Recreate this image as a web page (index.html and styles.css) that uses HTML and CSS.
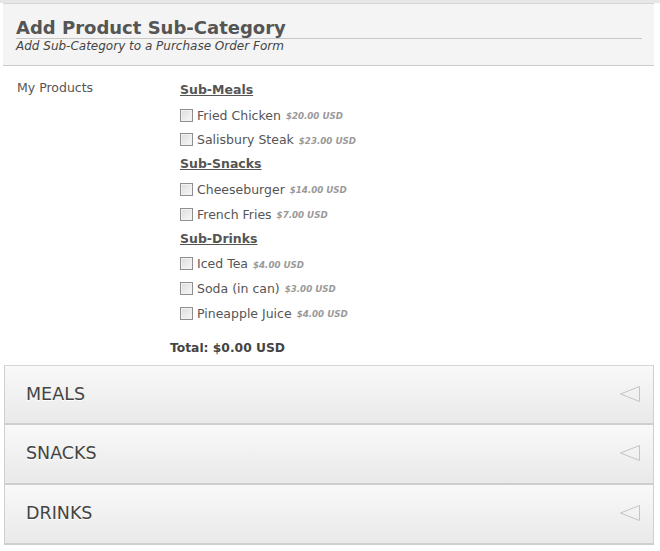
FILE: index.html
```html
<!DOCTYPE html>
<html>
<head>
<meta charset="utf-8">
<link rel="stylesheet" href="styles.css">
</head>
<body>
<div class="page">
  <div class="header">
    <h1 class="title">Add Product Sub-Category</h1>
    <div class="subtitle">Add Sub-Category to a Purchase Order Form</div>
  </div>
  <div class="form">
    <div class="label">My Products</div>
    <div class="options">
      <div class="group">Sub-Meals</div>
      <label class="item"><span class="box"></span>Fried Chicken <span class="price">$20.00 USD</span></label>
      <label class="item"><span class="box"></span>Salisbury Steak <span class="price">$23.00 USD</span></label>
      <div class="group">Sub-Snacks</div>
      <label class="item"><span class="box"></span>Cheeseburger <span class="price">$14.00 USD</span></label>
      <label class="item"><span class="box"></span>French Fries <span class="price">$7.00 USD</span></label>
      <div class="group">Sub-Drinks</div>
      <label class="item"><span class="box"></span>Iced Tea <span class="price">$4.00 USD</span></label>
      <label class="item"><span class="box"></span>Soda (in can) <span class="price">$3.00 USD</span></label>
      <label class="item"><span class="box"></span>Pineapple Juice <span class="price">$4.00 USD</span></label>
    </div>
  </div>
  <div class="total">Total: $0.00 USD</div>
  <div class="accordion">
    <div class="panel"><span class="ptitle">MEALS</span><svg class="arrow" width="22" height="18" viewBox="0 0 22 18"><path d="M20.5 1.5 L1.5 9 L20.5 16.5 Z" fill="none" stroke="#c4c4c4" stroke-width="1"/></svg></div>
    <div class="panel"><span class="ptitle">SNACKS</span><svg class="arrow" width="22" height="18" viewBox="0 0 22 18"><path d="M20.5 1.5 L1.5 9 L20.5 16.5 Z" fill="none" stroke="#c4c4c4" stroke-width="1"/></svg></div>
    <div class="panel"><span class="ptitle">DRINKS</span><svg class="arrow" width="22" height="18" viewBox="0 0 22 18"><path d="M20.5 1.5 L1.5 9 L20.5 16.5 Z" fill="none" stroke="#c4c4c4" stroke-width="1"/></svg></div>
  </div>
</div>
</body>
</html>
```
FILE: styles.css
```css
* { box-sizing: border-box; }
html, body { margin: 0; padding: 0; background: #fff; }
body {
  font-family: "DejaVu Sans", Verdana, sans-serif;
  color: #444;
}
.page {
  border-top: 3px solid #e6e6e6;
  width: 660px;
}
.header {
  margin: 0 6px 0 3px;
  background: #f4f4f4;
  border-top: 1px solid #d6d6d6;
  border-bottom: 1px solid #cccccc;
  padding: 14px 12px 11px 13px;
  height: 63px;
}
.title {
  margin: 0;
  font-size: 18px;
  font-weight: bold;
  color: #555;
  line-height: 20px;
  padding-bottom: 0;
  border-bottom: 1px solid #c8c8c8;
}
.subtitle {
  font-size: 12px;
  font-style: italic;
  color: #444;
  line-height: 15px;
}
.form {
  display: flex;
  padding: 12px 0 0 17px;
}
.label {
  width: 163px;
  font-size: 12.5px;
  line-height: 20px;
  color: #555;
}
.options {
  display: flex;
  flex-direction: column;
}
.group {
  font-size: 12.5px;
  font-weight: bold;
  text-decoration: underline;
  color: #555;
  height: 24.75px;
  line-height: 24.75px;
}
.item {
  display: flex;
  align-items: center;
  font-size: 12.5px;
  color: #555;
  height: 24.75px;
  white-space: pre;
}
.box {
  width: 13px;
  height: 13px;
  border: 1px solid #8f8f8f;
  background: linear-gradient(135deg, #dcdcdc, #f8f8f8);
  box-shadow: inset 0 0 0 1px #f2f2f2;
  margin-right: 4px;
}
.price {
  font-size: 8.7px;
  font-weight: bold;
  font-style: italic;
  color: #9a9a9a;
  margin-left: 1px;
  padding-top: 2px;
}
.total {
  font-size: 12.3px;
  font-weight: bold;
  color: #444;
  padding: 14px 0 0 170px;
  line-height: 16px;
  height: 39.6px;
}
.accordion {
  margin: 0 6px 0 4px;
}
.panel {
  display: flex;
  align-items: center;
  justify-content: space-between;
  height: 60px;
  border: 1px solid #cfcfcf;
  border-top: none;
  border-bottom: 2px solid #cfcfcf;
  background: linear-gradient(#f9f9f9, #e9e9e9);
  padding: 0 12px 2px 21px;
}
.panel:first-child { border-top: 1px solid #d6d6d6; }
.ptitle {
  font-size: 17.5px;
  color: #444;
  text-shadow: 0 1px 0 #fff;
}
.arrow { display: block; }
```
